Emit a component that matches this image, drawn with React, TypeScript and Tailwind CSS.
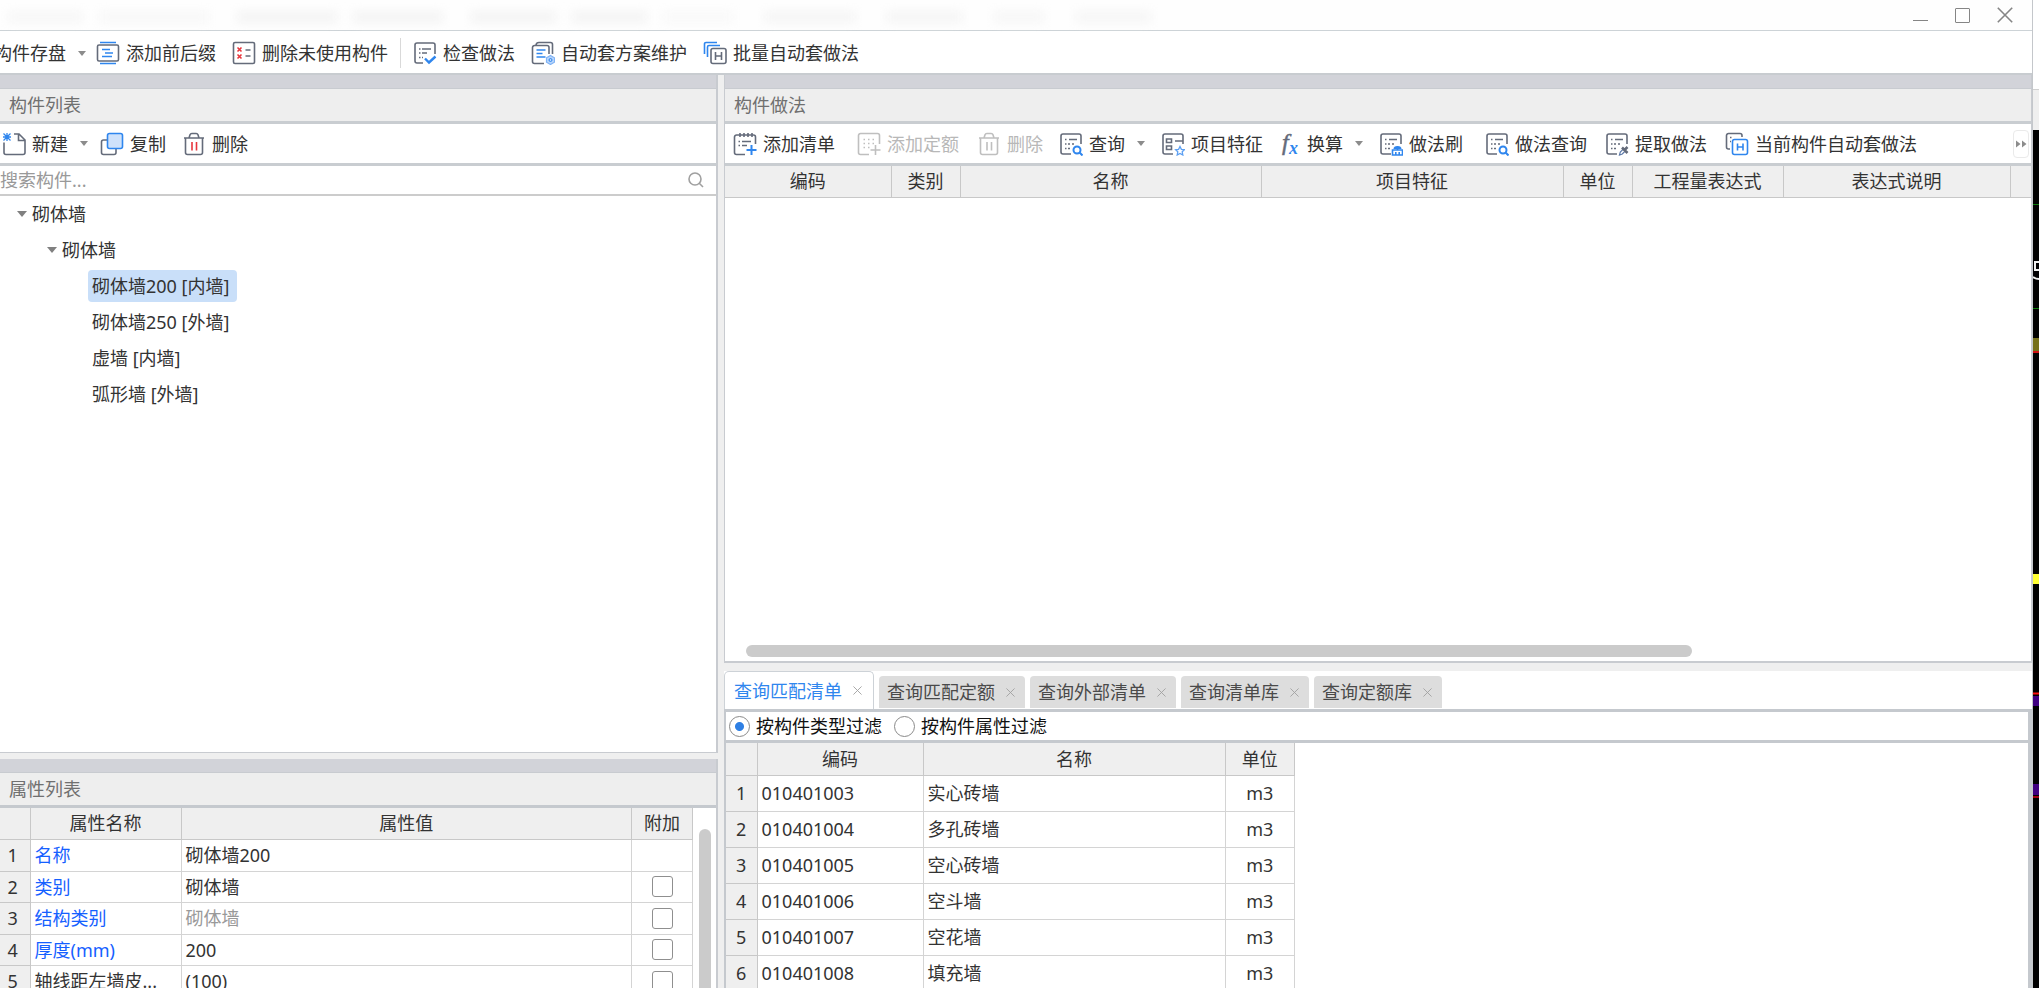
import { useState } from "react"
import type { ReactNode } from "react"

type IconProps = { children: ReactNode; className?: string }

const SHEET = "M12 22H4a2 2 0 0 1-2-2V4a2 2 0 0 1 2-2h16a2 2 0 0 1 2 2v8"
const LINES = "M6 7.5h1.5M10 7.5h8M6 12h1.5M9 12h2M13 12h2M6 16.5h1.5M9 16.5h2"

function Icon({ children, className = "text-[#646b7a]" }: IconProps) {
  return (
    <svg
      viewBox="0 0 24 24"
      className={`w-6 h-6 shrink-0 ${className}`}
      fill="none"
      stroke="currentColor"
      strokeWidth="1.6"
      aria-hidden="true"
    >
      {children}
    </svg>
  )
}

const icons = {
  prefix: (
    <Icon>
      <rect x="1.5" y="4" width="21" height="16" rx="1.5" />
      <path d="M4 1.5h16M4 22.5h16M6 8.5h8M9 12h8M6 15.5h10" stroke="#2f86ee" />
    </Icon>
  ),
  unused: (
    <Icon>
      <rect x="1.5" y="1.5" width="21" height="21" rx="1.5" />
      <path d="M13.5 9h5M13.5 15h5" />
      <path d="m5.5 6.5 4 4m0-4-4 4m0 3 4 4m0-4-4 4" stroke="#e8363d" />
    </Icon>
  ),
  check: (
    <Icon>
      <path d="M10 22H4a2 2 0 0 1-2-2V4a2 2 0 0 1 2-2h16a2 2 0 0 1 2 2v9" />
      <path d="M6 8h1.5M9 8h9M6 12h1.5M9 12h5M6 16.5h1.5M9 16.5h1" />
      <path d="m12 17.5 4 4 6.5-6" stroke="#2f86ee" strokeWidth="2.4" />
    </Icon>
  ),
  scheme: (
    <Icon>
      <path d="M13 22.500H3.500a2 2 0 0 1-2-2V6.500a2 2 0 0 1 2-2h12.500a2 2 0 0 1 2 2V13" />
      <path d="M5 4.500a3 3 0 0 1 3-3h11.500a2 2 0 0 1 2 2V13" />
      <path d="M5.500 9h9M5.500 12.500h6M5.500 16h9" stroke="#2f86ee" />
      <path d="m19.500 14.500 4 2.300v4.400l-4 2.300-4-2.300v-4.400z" fill="#b9d6fb" stroke="#7fb2f5" strokeWidth="1.200" />
      <circle cx="19.500" cy="19" r="1.500" stroke="#2f86ee" strokeWidth="1" />
    </Icon>
  ),
  batch: (
    <Icon>
      <path d="M1.500 13V3a1.500 1.500 0 0 1 1.500-1.500h11M4.500 16V6A1.500 1.500 0 0 1 6 4.500h11" stroke="#2f86ee" />
      <rect x="8" y="7.500" width="15" height="15" rx="2" />
      <path d="M12.500 11v8M18.500 11v8M12.500 15h6" />
    </Icon>
  ),
  create: (
    <Icon>
      <path d="M2 10.500v10a2 2 0 0 0 2 2h17a2 2 0 0 0 2-2V8l-6-6h-5M16.500 2v6.500H23" />
      <path d="m1.500 1.500 7 7m0-7-7 7M5 1v8M1 5h8" stroke="#2f86ee" strokeWidth="1.300" />
    </Icon>
  ),
  copy: (
    <Icon>
      <path d="M7 8H3.500a2 2 0 0 0-2 2v10.500a2 2 0 0 0 2 2H14a2 2 0 0 0 2-2V17" />
      <rect x="7.500" y="1.500" width="15" height="15" rx="2" fill="#cfe2fb" stroke="#2f86ee" />
    </Icon>
  ),
  trash: (
    <Icon>
      <path d="M2 6h20M3.500 6v14.500a2 2 0 0 0 2 2h13a2 2 0 0 0 2-2V6M7 6l1-3.200A2 2 0 0 1 10 1.500h4a2 2 0 0 1 2 1.300L17 6" />
      <path d="M10 10v8.500M14.500 10v8.500" stroke="#e8363d" />
    </Icon>
  ),
  trashOff: (
    <Icon className="text-[#bfbfbf]">
      <path d="M2 6h20M3.500 6v14.500a2 2 0 0 0 2 2h13a2 2 0 0 0 2-2V6M7 6l1-3.200A2 2 0 0 1 10 1.500h4a2 2 0 0 1 2 1.300L17 6M10 10v8.500M14.500 10v8.500" />
    </Icon>
  ),
  addList: (
    <Icon>
      <path d="M12 22.500H3.500a2 2 0 0 1-2-2V5a2 2 0 0 1 2-2h17a2 2 0 0 1 2 2v7M7 1v4M11 1v4M15 1v4M19 1v4" />
      <path d="M5.500 9.500H7M9 9.500h9M5.500 13.500H7M9 13.500h5" />
      <path d="M18.500 13v10M13.500 18h10" stroke="#2f86ee" strokeWidth="2" />
    </Icon>
  ),
  addQuota: (
    <Icon className="text-[#bfbfbf]">
      <path d="M12 22.500H3.500a2 2 0 0 1-2-2v-17a2 2 0 0 1 2-2h17a2 2 0 0 1 2 2V12" />
      <path d="M6.500 7.500H8M11 7.500h1.500M15.500 7.500H17M6.500 11.500H8M11 11.500h1.500M15.500 11.500H17M6.500 15.500H8M11 15.500h1.500" />
      <path d="M18.500 13v10M13.500 18h10" />
    </Icon>
  ),
  query: (
    <Icon>
      <path d={SHEET} />
      <path d={LINES} />
      <circle cx="18" cy="18" r="3.500" stroke="#2f86ee" strokeWidth="2" />
      <path d="m20.500 20.500 3 3" stroke="#2f86ee" strokeWidth="2" />
    </Icon>
  ),
  feature: (
    <Icon>
      <path d={SHEET} />
      <path d="M5.500 7h5v3.500h-5zM5.500 14h5v3.500h-5zM14 9h8" />
      <path d="m19 14.500 1.400 2.800 3 .4-2.200 2.100.6 3.200-2.800-1.500-2.800 1.500.6-3.200-2.200-2.100 3-.4z" stroke="#5c9ff2" strokeWidth="1.300" />
    </Icon>
  ),
  convert: (
    <Icon>
      <text x="5" y="18" fontFamily="Liberation Serif, serif" fontSize="24" fontStyle="italic" fill="#646b7a" strokeWidth="0.500">
        f
      </text>
      <text x="12" y="22" fontFamily="Liberation Serif, serif" fontSize="18" fontStyle="italic" fontWeight="bold" fill="#2f86ee" stroke="none">
        x
      </text>
    </Icon>
  ),
  brush: (
    <Icon>
      <path d={SHEET} />
      <path d={LINES} />
      <path d="M13.500 18h10v5h-10zM16.800 23v-3M20.200 23v-3M18.500 18v-3.500" stroke="#2f86ee" />
      <path d="M14.500 17a4 3 0 0 1 8 0z" fill="#2f86ee" stroke="none" />
    </Icon>
  ),
  extract: (
    <Icon>
      <path d={SHEET} />
      <path d={LINES} />
      <path d="m14.500 23 .8-3 3-3 2 2-3 3z" stroke="#5c79a8" strokeWidth="1.200" />
      <path d="m17 15.500 5.500 5.500M19.500 18l3-3" strokeWidth="2.600" />
    </Icon>
  ),
  auto: (
    <Icon>
      <path d="M5 17H3.500a2 2 0 0 1-2-2V3.500a2 2 0 0 1 2-2H15a2 2 0 0 1 2 2V5M5 5.500h1.500M5 9.500h1" />
      <rect x="7.500" y="7.500" width="15" height="15" rx="2" stroke="#2f86ee" />
      <path d="M12.500 11.500v7M18 11.500v7M12.500 15H18" stroke="#2f86ee" />
    </Icon>
  ),
}

type Tool = { label: string; icon?: ReactNode; caret?: boolean; disabled?: boolean; space?: string }

const mainTools: Tool[] = [
  { label: "添加前后缀", icon: icons.prefix, space: "ml-[10px]" },
  { label: "删除未使用构件", icon: icons.unused, space: "ml-4" },
]

const methodTools: Tool[] = [
  { label: "检查做法", icon: icons.check, space: "ml-3" },
  { label: "自动套方案维护", icon: icons.scheme, space: "ml-4" },
  { label: "批量自动套做法", icon: icons.batch, space: "ml-4" },
]

const listTools: Tool[] = [
  { label: "新建", icon: icons.create, caret: true, space: "ml-0.5" },
  { label: "复制", icon: icons.copy, space: "ml-3" },
  { label: "删除", icon: icons.trash, space: "ml-4" },
]

const detailTools: Tool[] = [
  { label: "添加清单", icon: icons.addList, space: "ml-2" },
  { label: "添加定额", icon: icons.addQuota, disabled: true, space: "ml-[22px]" },
  { label: "删除", icon: icons.trashOff, disabled: true, space: "ml-[18px]" },
  { label: "查询", icon: icons.query, space: "ml-4", caret: true },
  { label: "项目特征", icon: icons.feature, space: "ml-4" },
  { label: "换算", icon: icons.convert, space: "ml-[14px]", caret: true },
  { label: "做法刷", icon: icons.brush, space: "ml-4" },
  { label: "做法查询", icon: icons.query, space: "ml-[22px]" },
  { label: "提取做法", icon: icons.extract, space: "ml-[18px]" },
  { label: "当前构件自动套做法", icon: icons.auto, space: "ml-[18px]" },
]

const treeItems = ["砌体墙200 [内墙]", "砌体墙250 [外墙]", "虚墙 [内墙]", "弧形墙 [外墙]"]

const properties = [
  { name: "名称", value: "砌体墙200", key: true },
  { name: "类别", value: "砌体墙", key: true, extra: true },
  { name: "结构类别", value: "砌体墙", key: true, extra: true, muted: true },
  { name: "厚度(mm)", value: "200", key: true, extra: true },
  { name: "轴线距左墙皮...", value: "(100)", extra: true },
]

const tabs = ["查询匹配清单", "查询匹配定额", "查询外部清单", "查询清单库", "查询定额库"]

const results = [
  ["010401003", "实心砖墙"],
  ["010401004", "多孔砖墙"],
  ["010401005", "空心砖墙"],
  ["010401006", "空斗墙"],
  ["010401007", "空花墙"],
  ["010401008", "填充墙"],
]

function Caret() {
  return <span className="ml-3 w-0 h-0 border-x-4 border-t-[5px] border-x-transparent border-t-[#8c8c8c]" />
}

function ToolButton({ label, icon, caret, disabled, space }: Tool) {
  return (
    <button
      disabled={disabled}
      className={`flex items-center shrink-0 whitespace-nowrap ${space} ${disabled ? "text-[#b8b8b8]" : ""}`}
    >
      {icon}
      <span className={icon ? "ml-[6px]" : ""}>{label}</span>
      {caret && <Caret />}
    </button>
  )
}

function PanelTitle({ children }: { children: ReactNode }) {
  return (
    <>
      <div className="h-[14px] shrink-0 bg-[#d2d3d9] border-b border-[#c8cbd0]" />
      <h2 className="h-8 shrink-0 flex items-center pl-[9px] bg-[#eeeeee] text-[#707070]">{children}</h2>
    </>
  )
}

function CloseIcon({ className }: { className: string }) {
  return (
    <svg viewBox="0 0 10 10" className={className} fill="none" stroke="currentColor" strokeWidth="1" aria-hidden="true">
      <path d="m.5.5 9 9m0-9-9 9" />
    </svg>
  )
}

function TitleBar() {
  return (
    <header className="h-[31px] shrink-0 flex items-center border-b border-[#cdd3d7] bg-[#fefefe]">
      <div className="flex-1 flex gap-4 pl-2 pt-1 blur-[5px]" aria-hidden="true">
        <div className="w-[75px] h-3 bg-[#f7f7f7]" />
        <div className="w-[110px] h-3 bg-[#f8f8f8]" />
        <div className="w-[100px] h-3 bg-[#f4f4f4] ml-3" />
        <div className="w-[90px] h-3 bg-[#f4f4f4]" />
        <div className="w-[85px] h-3 bg-[#f4f4f4] ml-3" />
        <div className="w-[75px] h-3 bg-[#f4f4f4]" />
        <div className="w-[70px] h-3 bg-[#f9f9f9]" />
        <div className="w-[90px] h-3 bg-[#f5f5f5] ml-4" />
        <div className="w-[75px] h-3 bg-[#f5f5f5] ml-4" />
        <div className="w-[50px] h-3 bg-[#f7f7f7] ml-4" />
        <div className="w-[75px] h-3 bg-[#f6f6f6] ml-4" />
      </div>
      <div className="flex items-center gap-[27px] pr-[19px] text-[#858585]">
        <button aria-label="最小化" className="w-[15px] h-4 flex items-end pb-0.5">
          <span className="w-full h-px bg-[#858585]" />
        </button>
        <button aria-label="最大化" className="w-[15px] h-[15px] border border-[#858585] rounded-[1px]" />
        <button aria-label="关闭" className="w-4 h-4">
          <CloseIcon className="w-4 h-4" />
        </button>
      </div>
    </header>
  )
}

function ComponentList() {
  const [selected, setSelected] = useState(treeItems[0])

  return (
    <section className="min-h-0 flex flex-col border-r-2 border-b border-[#c8cbd0] overflow-hidden">
      <PanelTitle>构件列表</PanelTitle>
      <div className="h-[45px] shrink-0 flex items-center border-y-[3px] border-[#c9cdd1]">
        {listTools.map((tool) => (
          <ToolButton key={tool.label} {...tool} />
        ))}
      </div>
      <div className="h-[30px] shrink-0 flex items-center pr-3 border-b-2 border-[#cccccc]">
        <input
          aria-label="搜索构件"
          placeholder="搜索构件..."
          className="flex-1 min-w-0 outline-none placeholder:text-[#999999]"
        />
        <svg viewBox="0 0 16 16" className="w-4 h-4 text-[#a0a0a0]" fill="none" stroke="currentColor" strokeWidth="1.6">
          <circle cx="7" cy="7" r="6" />
          <path d="m11 11 4 4" />
        </svg>
      </div>
      <ul className="leading-9">
        <li>
          <div className="flex items-center pl-[17px]">
            <span className="mr-[5px] w-0 h-0 border-x-[5px] border-t-[6px] border-x-transparent border-t-[#808080]" />
            砌体墙
          </div>
          <ul>
            <li>
              <div className="flex items-center pl-[47px]">
                <span className="mr-[5px] w-0 h-0 border-x-[5px] border-t-[6px] border-x-transparent border-t-[#808080]" />
                砌体墙
              </div>
              <ul className="pl-[88px]">
                {treeItems.map((item) => (
                  <li key={item} className="h-9 flex items-center">
                    <button
                      onClick={() => setSelected(item)}
                      className={`h-8 pl-1 pr-2 rounded-[4px] flex items-center ${item === selected ? "bg-[#c9dff9]" : ""}`}
                    >
                      {item}
                    </button>
                  </li>
                ))}
              </ul>
            </li>
          </ul>
        </li>
      </ul>
    </section>
  )
}

function PropertyList() {
  return (
    <section className="min-h-0 flex flex-col border-r-2 border-[#c8cbd0] overflow-hidden">
      <PanelTitle>属性列表</PanelTitle>
      <div className="flex-1 min-h-0 flex border-t-[3px] border-[#c5c9ce] overflow-hidden">
        <div className="flex-1 min-w-0">
          <table className="w-full table-fixed border-collapse">
            <thead>
              <tr className="h-[31px] bg-[#efefef]">
                <th className="w-[30px] border-r border-b border-[#c8c8c8]" />
                <th className="w-[151px] border-r border-b border-[#c8c8c8] font-normal">属性名称</th>
                <th className="border-r border-b border-[#c8c8c8] font-normal">属性值</th>
                <th className="w-[61px] border-r border-b border-[#c8c8c8] font-normal">附加</th>
              </tr>
            </thead>
            <tbody>
              {properties.map((row, i) => (
                <tr key={row.name} className="odd:h-8 even:h-[31px]">
                  <td className="border-r border-b border-[#c8c8c8] bg-[#efefef] text-center pr-1">{i + 1}</td>
                  <td className={`border-r border-b border-[#d4d4d4] pl-1 whitespace-nowrap ${row.key ? "text-[#1560ff]" : ""}`}>
                    {row.name}
                  </td>
                  <td className={`border-r border-b border-[#d4d4d4] pl-1 ${row.muted ? "text-[#999999]" : ""}`}>{row.value}</td>
                  <td className="border-r border-b border-[#d4d4d4]">
                    {row.extra && (
                      <input
                        type="checkbox"
                        aria-label={`附加 ${row.name}`}
                        className="block mx-auto appearance-none w-[21px] h-[21px] border border-[#8f8f8f] rounded-[3px] bg-white checked:bg-[#2f86ee]"
                      />
                    )}
                  </td>
                </tr>
              ))}
            </tbody>
          </table>
        </div>
        <div className="w-[23px] shrink-0 flex justify-center pt-[21px]">
          <div className="w-3 h-full rounded-t-full bg-[#cbcbcb]" />
        </div>
      </div>
    </section>
  )
}

function MethodPanel() {
  return (
    <section className="min-h-0 flex flex-col border-x border-b-2 border-[#c8cbd0] overflow-hidden">
      <PanelTitle>构件做法</PanelTitle>
      <div className="h-[45px] shrink-0 flex items-center border-y-[3px] border-[#c9cdd1]">
        {detailTools.map((tool, i) => (
          <ToolButton key={i} {...tool} />
        ))}
        <button
          aria-label="更多"
          className="ml-auto mr-0.5 w-4 h-7 shrink-0 flex items-center justify-center rounded border border-[#eaeaea]"
        >
          <svg viewBox="0 0 12 8" className="w-3 h-2 shrink-0" fill="#8c8c8c">
            <path d="m1 .500 4.500 3.500L1 7.500zM7 .500 11.500 4 7 7.500z" />
          </svg>
        </button>
      </div>
      <table className="w-full table-fixed border-collapse">
        <thead>
          <tr className="h-[31px] bg-[#efefef]">
            <th className="w-[166px] border-r border-b border-[#c8c8c8] font-normal">编码</th>
            <th className="w-[69px] border-r border-b border-[#c8c8c8] font-normal">类别</th>
            <th className="w-[301px] border-r border-b border-[#c8c8c8] font-normal">名称</th>
            <th className="w-[302px] border-r border-b border-[#c8c8c8] font-normal">项目特征</th>
            <th className="w-[69px] border-r border-b border-[#c8c8c8] font-normal">单位</th>
            <th className="w-[151px] border-r border-b border-[#c8c8c8] font-normal">工程量表达式</th>
            <th className="w-[227px] border-r border-b border-[#c8c8c8] font-normal">表达式说明</th>
            <th className="border-b border-[#c8c8c8]" />
          </tr>
        </thead>
      </table>
      <div className="mt-auto mb-1 pl-[21px] pr-[6px]">
        <div className="h-3 w-[74%] rounded-full bg-[#cbcbcb]" />
      </div>
    </section>
  )
}

function QueryPanel() {
  const [tab, setTab] = useState(tabs[0])
  const [filter, setFilter] = useState("type")

  const filters = [
    { id: "type", label: "按构件类型过滤" },
    { id: "attr", label: "按构件属性过滤" },
  ]

  return (
    <section className="min-h-0 flex flex-col bg-white overflow-hidden">
      <div className="h-[38px] shrink-0 flex items-end gap-[5px]">
        {tabs.map((name) => (
          <div
            key={name}
            className={
              name === tab
                ? "h-full flex items-center px-[9px] rounded-t-[5px] border border-b-0 border-[#cdd2d7] bg-white text-[#2f86ee]"
                : "h-8 mb-px flex items-center px-2 rounded-t-[4px] bg-[#dddddd] text-[#4a4a4a]"
            }
          >
            <button onClick={() => setTab(name)}>{name}</button>
            <button aria-label={`关闭${name}`} className="ml-[11px] mr-0.5 text-[#a0a0a0]">
              <CloseIcon className="w-[9px] h-[9px]" />
            </button>
          </div>
        ))}
      </div>
      <div className="flex-1 min-h-0 flex flex-col border-t-[3px] border-l-2 border-r-4 border-[#c5c9ce] overflow-hidden">
        <div className="h-7 shrink-0 flex items-center gap-3 pl-[3px] text-[#111111]">
          {filters.map((f) => (
            <label key={f.id} className="flex items-center gap-[6px]">
              <input
                type="radio"
                name="filter"
                checked={filter === f.id}
                onChange={() => setFilter(f.id)}
                className="appearance-none w-[21px] h-[21px] rounded-full border border-[#8a8a8a] bg-white checked:bg-[radial-gradient(circle,#2f80e4_4px,white_5px)]"
              />
              {f.label}
            </label>
          ))}
        </div>
        <div className="flex-1 min-h-0 border-t-[3px] border-[#c5c9ce] overflow-hidden">
          <table className="w-[569px] table-fixed border-collapse">
            <thead>
              <tr className="h-8 bg-[#efefef]">
                <th className="w-[31px] border-r border-b border-[#c8c8c8]" />
                <th className="w-[166px] border-r border-b border-[#c8c8c8] font-normal">编码</th>
                <th className="w-[302px] border-r border-b border-[#c8c8c8] font-normal">名称</th>
                <th className="border-r border-b border-[#c8c8c8] font-normal">单位</th>
              </tr>
            </thead>
            <tbody>
              {results.map(([code, name], i) => (
                <tr key={code} className="h-9">
                  <td className="border-r border-b border-[#c8c8c8] bg-[#efefef] text-center">{i + 1}</td>
                  <td className="border-r border-b border-[#d4d4d4] pl-1">{code}</td>
                  <td className="border-r border-b border-[#d4d4d4] pl-1">{name}</td>
                  <td className="border-r border-b border-[#d4d4d4] text-center">m3</td>
                </tr>
              ))}
            </tbody>
          </table>
        </div>
      </div>
    </section>
  )
}

// sliver of the drawing canvas that shows behind the dialog
function CanvasEdge() {
  return (
    <aside className="w-[6px] shrink-0 flex flex-col bg-black overflow-hidden">
      <div className="h-[90px] shrink-0 bg-white border-b border-[#d0d0d0]" />
      <div className="h-10 shrink-0 bg-[#efefef]" />
      <svg className="w-[6px] h-[700px] shrink-0" viewBox="0 0 6 700" aria-hidden="true">
        <path d="M0 74.500h6M0 178.500h6" stroke="#0a7a0a" />
        <path d="M6 132H2v8h4M0 147q3 2 6 2" stroke="#f0f0f0" strokeWidth="2" fill="none" />
        <path d="M0 208h6v13H0z" fill="#75701a" />
        <path d="M0 222h6" stroke="#d01010" strokeWidth="2" />
        <path d="M0 444h6v10H0z" fill="#ffff33" />
        <path d="M0 563.500h6" stroke="#ff1010" strokeWidth="2" />
        <path d="M0 566h6v10H0zM0 654h6v11H0z" fill="#3f0080" />
        <path d="M0 667h6" stroke="#a00010" strokeWidth="2" />
      </svg>
    </aside>
  )
}

export default function App() {
  return (
    <div className="h-screen flex overflow-hidden bg-white text-[18px] leading-6 text-[#333333] font-['Noto_Sans','Noto_Sans_CJK_SC',sans-serif]">
      <main className="flex-1 min-w-0 flex flex-col border-r border-[#c4c7cb]">
        <TitleBar />
        <div className="h-11 shrink-0 flex items-center pt-0.5 border-b-2 border-[#c8ccd0] overflow-hidden">
          <ToolButton label="构件存盘" caret space="-ml-[6px]" />
          {mainTools.map((tool) => (
            <ToolButton key={tool.label} {...tool} />
          ))}
          <div className="ml-3 w-px h-[30px] bg-[#d9d9d9]" />
          {methodTools.map((tool) => (
            <ToolButton key={tool.label} {...tool} />
          ))}
        </div>
        <div className="flex-1 min-h-0 grid grid-cols-[718fr_1308fr] gap-x-[6px] bg-[#efefef]">
          <div className="min-w-0 min-h-0 grid grid-rows-[678fr_229fr] gap-y-[6px] *:bg-white">
            <ComponentList />
            <PropertyList />
          </div>
          <div className="min-w-0 min-h-0 grid grid-rows-[588fr_317fr] gap-y-2 *:bg-white">
            <MethodPanel />
            <QueryPanel />
          </div>
        </div>
      </main>
      <CanvasEdge />
    </div>
  )
}
